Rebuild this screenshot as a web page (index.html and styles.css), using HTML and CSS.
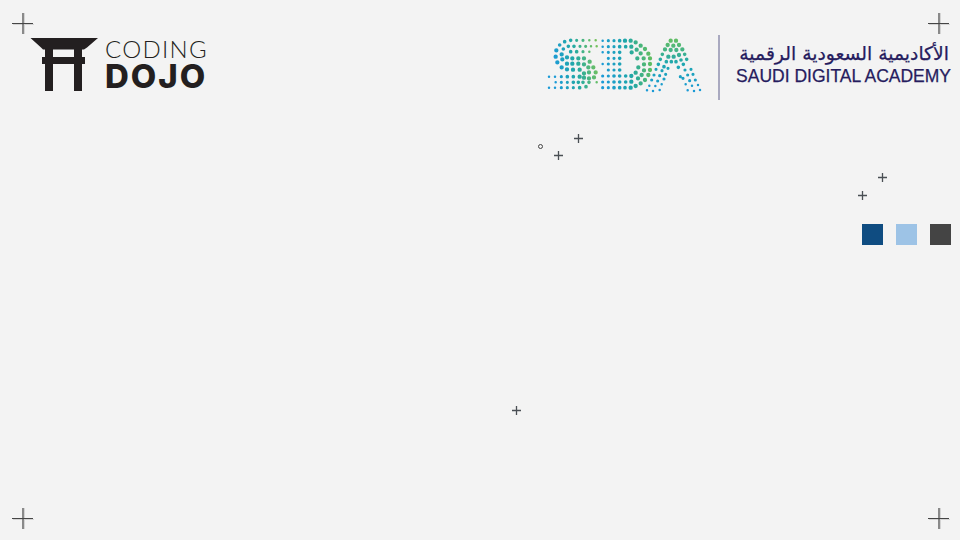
FILE: index.html
```html
<!DOCTYPE html>
<html lang="en">
<head>
<meta charset="utf-8">
<title>Coding Dojo - Saudi Digital Academy</title>
<link rel="stylesheet" href="styles.css">
</head>
<body>
<svg class="defs" width="0" height="0" aria-hidden="true">
  <defs>
    <symbol id="cross-lg" viewBox="0 0 23 23">
      <path class="cross-shadow" d="M1 12.5H22M12.5 1V22"/>
      <path class="cross-line" d="M0 11.5H21M11 1V22"/>
    </symbol>
    <symbol id="cross-sm" viewBox="0 0 11 11">
      <path class="cross-thin" d="M1 5.5H10M5.5 1V10"/>
    </symbol>
    <linearGradient id="gs" gradientUnits="userSpaceOnUse" x1="45" y1="120" x2="175" y2="100">
      <stop offset="0" stop-color="#1b9ad6"/><stop offset=".5" stop-color="#22a9a4"/><stop offset="1" stop-color="#74c25c"/>
    </linearGradient>
    <linearGradient id="gd" gradientUnits="userSpaceOnUse" x1="190" y1="120" x2="335" y2="100">
      <stop offset="0" stop-color="#1b9ad6"/><stop offset=".55" stop-color="#1fa7a8"/><stop offset="1" stop-color="#5fbd62"/>
    </linearGradient>
    <linearGradient id="ga" gradientUnits="userSpaceOnUse" x1="400" y1="198" x2="400" y2="47">
      <stop offset="0" stop-color="#1b9ad6"/><stop offset=".55" stop-color="#1fa7b0"/><stop offset="1" stop-color="#60bd66"/>
    </linearGradient>
  </defs>
</svg>

<main class="slide">
  <header class="logos">
    <div class="dojo">
      <svg class="gate" viewBox="30 38 68 53" role="img" aria-label="Torii gate">
        <path d="M30.5 38H98L87 47.5 84 49.5H43L41 47.5Z"/>
        <path d="M45 49H53V57H74V49H82V57H85V64H82V91H74V64H53V91H45V64H42V57H45Z"/>
      </svg>
      <div class="dojo-text">
        <span class="coding">CODING</span>
        <span class="dojo-word">DOJO</span>
      </div>
    </div>

    <div class="sda">
      <svg class="sda-mark" viewBox="0 0 525 240" role="img" aria-label="SDA">
        <g class="dots" stroke="url(#gs)">
          <path class="d3" d="M151 46h0M170 46h0M156 64h0M173 64h0M151 80h0M30 155h0M48 155h0M30 188h0M48 188h0M50 172h0M173 172h0"/>
          <path class="d4" d="M113 46h0M132 46h0M123 64h0M140 64h0M132 80h0M67 155h0M67 172h0M67 188h0M85 172h0M85 188h0M103 188h0"/>
          <path class="d5" d="M77 50h0M95 46h0M62 60h0M105 64h0M88 64h0M73 72h0M95 80h0M113 80h0M85 155h0M103 172h0M122 188h0M103 155h0M118 172h0M132 172h0M141 185h0M150 172h0"/>
          <path class="d6" d="M52 76h0M50 95h0M68 88h0M84 97h0M55 112h0M70 103h0M68 127h0M84 116h0M100 100h0M118 100h0M135 100h0M100 116h0M118 116h0M135 118h0M152 110h0M148 127h0M163 127h0M170 142h0M150 142h0M135 145h0M122 134h0M84 133h0M102 134h0M122 155h0M135 158h0M150 160h0M165 157h0"/>
        </g>
        <g class="dots" stroke="url(#gd)">
          <path class="d3" d="M191 47h0M191 65h0M191 117h0M191 82h0"/>
          <path class="d4" d="M208 47h0M208 65h0M225 65h0M208 82h0M208 100h0M208 117h0M208 135h0M191 153h0M191 171h0M191 188h0M208 153h0M208 171h0M208 188h0M225 47h0M225 82h0M225 100h0M225 117h0M225 135h0"/>
          <path class="d5" d="M242 47h0M242 65h0M242 82h0M242 100h0M242 117h0M242 135h0M225 153h0M225 171h0M225 188h0M242 153h0M242 171h0M242 188h0M260 65h0M260 153h0M260 171h0M258 188h0"/>
          <path class="d6" d="M258 47h0M275 47h0M277 65h0M278 82h0M277 153h0M277 170h0M275 188h0M290 52h0M305 62h0M318 72h0M328 86h0M333 100h0M333 117h0M333 135h0M328 150h0M318 165h0M305 175h0M290 183h0M293 74h0M305 85h0M314 100h0M315 118h0M315 136h0M308 150h0M297 160h0M295 100h0M298 127h0M290 143h0"/>
        </g>
        <g class="dots" stroke="url(#ga)">
          <path class="d3" d="M324 196h0M342 198h0M362 195h0M446 196h0M465 198h0M483 195h0M331 182h0M349 183h0M368 178h0M440 178h0M459 182h0M477 180h0"/>
          <path class="d4" d="M338 165h0M356 168h0M375 162h0M432 160h0M452 167h0M469 165h0M345 150h0M362 152h0M380 148h0M424 155h0M446 150h0M462 148h0M351 133h0M369 137h0M387 130h0M438 135h0M456 133h0"/>
          <path class="d5" d="M358 118h0M375 125h0M418 127h0M433 118h0M364 103h0M382 110h0M397 110h0M411 110h0M426 105h0M443 103h0M370 88h0M437 88h0"/>
          <path class="d6" d="M388 95h0M404 95h0M420 90h0M378 73h0M395 75h0M412 75h0M430 73h0M386 60h0M403 62h0M420 60h0M395 47h0M411 47h0"/>
        </g>
      </svg>
      <div class="sda-rule"></div>
      <div class="sda-text">
        <span class="sda-ar" lang="ar" dir="rtl">الأكاديمية السعودية الرقمية</span>
        <span class="sda-en">SAUDI DIGITAL ACADEMY</span>
      </div>
    </div>
  </header>

  <div class="swatches">
    <span class="swatch swatch-navy"></span>
    <span class="swatch swatch-sky"></span>
    <span class="swatch swatch-grey"></span>
  </div>

  <svg class="cross-big c-tl"><use href="#cross-lg"/></svg>
  <svg class="cross-big c-tr"><use href="#cross-lg"/></svg>
  <svg class="cross-big c-bl"><use href="#cross-lg"/></svg>
  <svg class="cross-big c-br"><use href="#cross-lg"/></svg>

  <svg class="cross-small s1"><use href="#cross-sm"/></svg>
  <svg class="cross-small s2"><use href="#cross-sm"/></svg>
  <svg class="cross-small s3"><use href="#cross-sm"/></svg>
  <svg class="cross-small s4"><use href="#cross-sm"/></svg>
  <svg class="cross-small s5"><use href="#cross-sm"/></svg>
  <span class="ring"></span>
</main>
</body>
</html>
```
FILE: styles.css
```css
html, body {
  margin: 0;
  padding: 0;
}

body {
  background: #f3f3f3;
}

.defs {
  position: absolute;
}

.slide {
  position: relative;
  width: 960px;
  height: 540px;
  overflow: hidden;
  background: #f3f3f3;
}

.logos {
  display: flex;
  justify-content: space-between;
  align-items: flex-start;
  height: 80px;
  padding: 25px 9px 0 30px;
}

.dojo {
  display: flex;
  gap: 7px;
  margin-top: 13px;
}

.gate {
  display: block;
  width: 68px;
  height: 53px;
  fill: #231f20;
}

.dojo-text {
  display: flex;
  flex-direction: column;
  margin-top: -1px;
  color: #231f20;
  font-family: Lato, "Liberation Sans", sans-serif;
}

.coding {
  font-size: 24px;
  font-weight: 300;
  line-height: 24px;
  letter-spacing: 1.3px;
}

.dojo-word {
  font-family: Inter, "Liberation Sans", sans-serif;
  font-size: 33px;
  font-weight: 800;
  line-height: 30px;
  letter-spacing: 2px;
}

.sda {
  display: flex;
  align-items: flex-start;
}

.sda-mark {
  display: block;
  width: 175px;
  height: 80px;
}

.dots path {
  fill: none;
  stroke-linecap: round;
}

.d3 { stroke-width: 7.5; }
.d4 { stroke-width: 9.5; }
.d5 { stroke-width: 11; }
.d6 { stroke-width: 13; }

.sda-rule {
  width: 2px;
  height: 65px;
  margin: 10px 0 0 4px;
  background: #a9a9c0;
}

.sda-text {
  display: flex;
  flex-direction: column;
  align-items: flex-end;
  margin: 17px 0 0 16px;
  color: #261c5e;
  -webkit-text-stroke: 0.25px #261c5e;
}

.sda-ar {
  font-family: "DejaVu Sans", sans-serif;
  font-size: 18.8px;
  line-height: 24px;
  padding-right: 2px;
}

.sda-en {
  font-family: "Liberation Sans", sans-serif;
  font-size: 17.5px;
  line-height: 20px;
}

.swatches {
  display: flex;
  justify-content: flex-end;
  gap: 13px;
  margin-top: 119px;
  padding-right: 9px;
}

.swatch {
  width: 21px;
  height: 21px;
}

.swatch-navy { background: #0f4c81; }
.swatch-sky { background: #9dc3e6; }
.swatch-grey { background: #444444; }

.cross-big,
.cross-small,
.ring {
  position: absolute;
}

.cross-big {
  width: 23px;
  height: 23px;
}

.cross-small {
  width: 11px;
  height: 11px;
}

.cross-shadow {
  fill: none;
  stroke: #d4d4d4;
  stroke-width: 1;
}

.cross-line {
  fill: none;
  stroke: #454545;
  stroke-width: 1.2;
}

.cross-thin {
  fill: none;
  stroke: #4a4f54;
  stroke-width: 1.3;
}

.c-tl { left: 12px; top: 12px; }
.c-tr { left: 928px; top: 12px; }
.c-bl { left: 12px; top: 507px; }
.c-br { left: 928px; top: 507px; }

.s1 { left: 573px; top: 133px; }
.s2 { left: 553px; top: 150px; }
.s3 { left: 877px; top: 172px; }
.s4 { left: 857px; top: 190px; }
.s5 { left: 511px; top: 405px; }

.ring {
  left: 538px;
  top: 144px;
  width: 3px;
  height: 3px;
  border: 1px solid #454545;
  border-radius: 50%;
}
```
